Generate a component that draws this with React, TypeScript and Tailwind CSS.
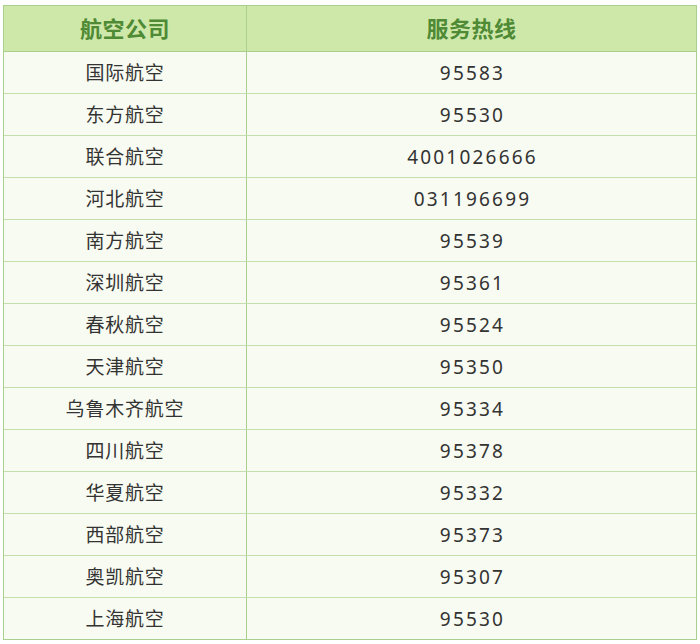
import React from 'react';

const rows: [string, string][] = [
  ['国际航空', '95583'],
  ['东方航空', '95530'],
  ['联合航空', '4001026666'],
  ['河北航空', '031196699'],
  ['南方航空', '95539'],
  ['深圳航空', '95361'],
  ['春秋航空', '95524'],
  ['天津航空', '95350'],
  ['乌鲁木齐航空', '95334'],
  ['四川航空', '95378'],
  ['华夏航空', '95332'],
  ['西部航空', '95373'],
  ['奥凯航空', '95307'],
  ['上海航空', '95530'],
];

export default function App() {
  return (
    <div
      className="w-[700px] h-[644px] bg-white pt-[5px] pl-[3px]"
      style={{ fontFamily: '"Noto Sans", "Noto Sans CJK SC", sans-serif' }}
    >
      <div className="w-[694px] border border-[#a9d08e] bg-[#f8fbf1]">
        {/* header */}
        <div className="grid grid-cols-[243px_1fr] h-[46px] bg-[#cee8a9] border-b border-[#a9d08e] text-[22px] font-bold text-[#4f8a35] tracking-[0.5px]">
          <div className="flex items-center justify-center border-r border-[#a9d08e]">航空公司</div>
          <div className="flex items-center justify-center">服务热线</div>
        </div>
        {rows.map(([name, phone], i) => (
          <div
            key={name}
            className={
              i === rows.length - 1
                ? 'grid grid-cols-[243px_1fr] h-[41px] text-[19px] text-[#333333]'
                : 'grid grid-cols-[243px_1fr] h-[42px] border-b border-[#c4deae] text-[19px] text-[#333333]'
            }
          >
            <div className="flex items-center justify-center pt-[2px] border-r border-[#a9d08e] tracking-[0.8px]">{name}</div>
            <div className="flex items-center justify-center pt-[2px] tracking-[2.2px] pl-[2px]">{phone}</div>
          </div>
        ))}
      </div>
    </div>
  );
}
